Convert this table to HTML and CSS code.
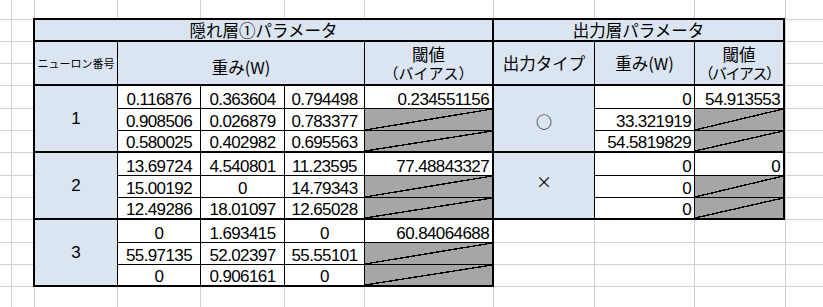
FILE: index.html
```
<!DOCTYPE html>
<html lang="ja">
<head>
<meta charset="utf-8">
<title>パラメータ</title>
<link rel="stylesheet" href="styles.css">
</head>
<body>
<div class="sheet">
  <div class="sec hid">
    <div class="c hd title tb tr s5">隠れ層①パラメータ</div>
    <div class="c hd tb small">ニューロン番号</div>
    <div class="c hd tb s3 low">重み(W)</div>
    <div class="c hd tb tr bias"><span class="top">閾値</span><span class="sub">（バイアス）</span></div>

    <div class="c hd tb r3 idx">1</div>
    <div class="c">0.116876</div><div class="c">0.363604</div><div class="c">0.794498</div><div class="c r tr">0.234551156</div>
    <div class="c">0.908506</div><div class="c">0.026879</div><div class="c">0.783377</div><div class="c x tr"></div>
    <div class="c tb">0.580025</div><div class="c tb">0.402982</div><div class="c tb">0.695563</div><div class="c x tr tb"></div>

    <div class="c hd tb r3 idx">2</div>
    <div class="c">13.69724</div><div class="c">4.540801</div><div class="c">11.23595</div><div class="c r tr">77.48843327</div>
    <div class="c">15.00192</div><div class="c">0</div><div class="c">14.79343</div><div class="c x tr"></div>
    <div class="c tb">12.49286</div><div class="c tb">18.01097</div><div class="c tb">12.65028</div><div class="c x tr tb"></div>

    <div class="c hd tb r3 idx">3</div>
    <div class="c">0</div><div class="c">1.693415</div><div class="c">0</div><div class="c r tr">60.84064688</div>
    <div class="c">55.97135</div><div class="c">52.02397</div><div class="c">55.55101</div><div class="c x tr"></div>
    <div class="c tb">0</div><div class="c tb">0.906161</div><div class="c tb">0</div><div class="c x tr tb"></div>
  </div>

  <div class="sec out">
    <div class="c hd title tb tr s3">出力層パラメータ</div>
    <div class="c hd tb">出力タイプ</div>
    <div class="c hd tb">重み(W)</div>
    <div class="c hd tb tr bias"><span class="top">閾値</span><span class="sub">（バイアス）</span></div>

    <div class="c hd tb r3 sym circ">○</div>
    <div class="c r">0</div><div class="c r tr">54.913553</div>
    <div class="c r">33.321919</div><div class="c x tr"></div>
    <div class="c r tb">54.5819829</div><div class="c x tr tb"></div>

    <div class="c hd tb r3 sym cross">×</div>
    <div class="c r">0</div><div class="c r tr">0</div>
    <div class="c r">0</div><div class="c x tr"></div>
    <div class="c r tb">0</div><div class="c x tr tb"></div>
  </div>
</div>
</body>
</html>
```
FILE: styles.css
```
html, body {
  margin: 0;
  height: 100%;
}

body {
  --g: linear-gradient(#d0d0d0, #d0d0d0);
  background:
    var(--g) 11px 0 / 1px 100% no-repeat,
    var(--g) 34px 0 / 1px 100% no-repeat,
    var(--g) 117px 0 / 1px 100% no-repeat,
    var(--g) 200px 0 / 1px 100% no-repeat,
    var(--g) 284px 0 / 1px 100% no-repeat,
    var(--g) 364px 0 / 1px 100% no-repeat,
    var(--g) 493px 0 / 1px 100% no-repeat,
    var(--g) 594px 0 / 1px 100% no-repeat,
    var(--g) 694px 0 / 1px 100% no-repeat,
    var(--g) 785px 0 / 1px 100% no-repeat,
    var(--g) 0 19px / 100% 1px no-repeat,
    var(--g) 0 41px / 100% 1px no-repeat,
    var(--g) 0 63px / 100% 1px no-repeat,
    var(--g) 0 85px / 100% 1px no-repeat,
    var(--g) 0 108px / 100% 1px no-repeat,
    var(--g) 0 130px / 100% 1px no-repeat,
    var(--g) 0 152px / 100% 1px no-repeat,
    var(--g) 0 175px / 100% 1px no-repeat,
    var(--g) 0 197px / 100% 1px no-repeat,
    var(--g) 0 219px / 100% 1px no-repeat,
    var(--g) 0 242px / 100% 1px no-repeat,
    var(--g) 0 264px / 100% 1px no-repeat,
    var(--g) 0 286px / 100% 1px no-repeat,
    #fff;
}

.sheet {
  display: flex;
  align-items: flex-start;
  padding: 18px 0 0 33px;
}

.sec {
  display: grid;
  border-top: 2px solid #000;
}

.hid {
  border-left: 2px solid #000;
  grid-template-columns: 83px 83px 84px 80px 129px;
  grid-template-rows: 22px 44px 23px 22px 22px 23px 22px 22px 23px 22px 22px;
}

.out {
  grid-template-columns: 101px 100px 90px;
  grid-template-rows: 22px 44px 23px 22px 22px 23px 22px 22px;
}

.c {
  box-sizing: border-box;
  border-right: 1px solid #000;
  border-bottom: 1px solid #000;
  background: #fff;
  display: flex;
  align-items: flex-end;
  justify-content: center;
  padding-bottom: 1px;
  font-family: "Liberation Sans", "Noto Sans CJK JP", sans-serif;
  font-size: 17px;
  line-height: 14px;
  letter-spacing: -0.6px;
  color: #000;
  white-space: nowrap;
  overflow: hidden;
}

.tb { border-bottom-width: 2px; }
.tr { border-right-width: 2px; }
.s5 { grid-column: span 5; }
.s3 { grid-column: span 3; }
.r3 { grid-row: span 3; }

.r {
  justify-content: flex-end;
  padding-right: 3px;
}

.x {
  background: linear-gradient(to bottom right,
    #a6a6a6 calc(50% - 0.7px),
    #000 calc(50% - 0.7px),
    #000 calc(50% + 0.7px),
    #a6a6a6 calc(50% + 0.7px));
}

.hd {
  background: #dbe5f1;
  font-family: "Noto Sans CJK JP", sans-serif;
  font-size: 16.5px;
  line-height: 1;
  letter-spacing: 0;
  align-items: center;
  padding: 0;
  overflow: visible;
}

.title { padding-top: 1px; }

.small { font-size: 11px; }

.low { padding-top: 9px; }

.bias {
  flex-direction: column;
  justify-content: flex-start;
  align-items: center;
  padding-top: 4px;
}

.top {
  height: 19px;
  line-height: 16px;
}

.sub {
  font-size: 15px;
  line-height: 15px;
  height: 16px;
}

.out .sub { letter-spacing: -1.5px; }

.idx {
  font-family: "Liberation Sans", sans-serif;
  font-size: 17px;
}

.circ {
  font-size: 16px;
  padding-top: 5px;
}

.cross {
  font-size: 16px;
  padding-bottom: 9px;
}
```
